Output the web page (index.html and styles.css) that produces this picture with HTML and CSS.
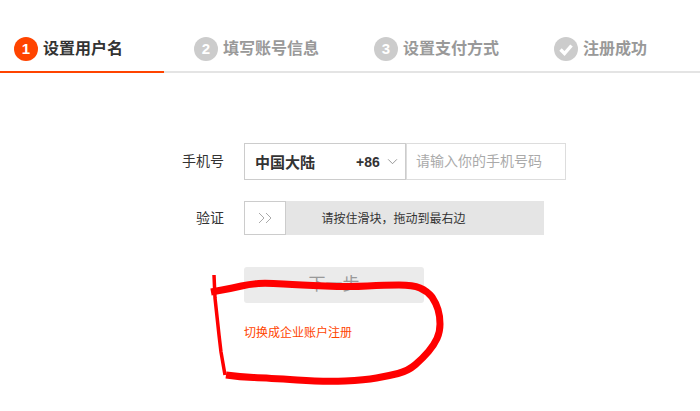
FILE: index.html
```html
<!DOCTYPE html>
<html lang="zh-CN">
<head>
  <meta charset="UTF-8">
  <title>注册</title>
  <link rel="stylesheet" href="styles.css">
</head>
<body>
  <div class="steps">
    <div class="step active"><span class="num">1</span>设置用户名</div>
    <div class="step"><span class="num">2</span>填写账号信息</div>
    <div class="step"><span class="num">3</span>设置支付方式</div>
    <div class="step">
      <span class="num"><svg viewBox="0 0 24 24"><path d="M6.5 12.5l4 4 7-8" /></svg></span>注册成功
    </div>
  </div>
  <form class="form">
    <div class="row">
      <label class="label label-phone">手机号</label>
      <div class="country">
        <span class="country-name">中国大陆</span>
        <span class="code">+86</span>
        <svg class="caret" viewBox="0 0 12 8"><path d="M1 1.5l5 5 5-5" /></svg>
      </div>
      <div class="phone">请输入你的手机号码</div>
    </div>
    <div class="row row-slide">
      <label class="label">验证</label>
      <div class="slider">
        <div class="handle"><svg viewBox="0 0 16 12"><path d="M2 1l5 5-5 5M9 1l5 5-5 5" /></svg></div>
        <div class="slider-text">请按住滑块，拖动到最右边</div>
      </div>
    </div>
    <div class="next">下一步</div>
    <a class="switch">切换成企业账户注册</a>
  </form>
  <svg class="scribble" viewBox="0 0 700 411">
    <path class="thin" d="M214 275L215 298L219 335L221 352L225 375" />
    <path class="thick" d="M211 292L222 290Q233 288 241.5 286Q250 284 258.5 283.5Q267 283 283.5 284Q300 285 325 286Q350 287 367.5 286Q385 285 399 285Q413 285 420 288Q427 291 432 297Q436 303 438 309.5Q440 316 440 324Q440 332 437 338.5Q434 345 428.5 351.5Q423 358 415.5 364.5Q408 371 398 373.5Q388 376 376.5 378Q365 380 345 381Q325 382 297 380Q267 378 253.5 377.5Q240 377 226 375" />
  </svg>
</body>
</html>
```
FILE: styles.css
```css
* { box-sizing: border-box; }
body {
  margin: 0;
  height: 411px;
  overflow: hidden;
  background: #fff;
  font-family: "Liberation Sans", "Noto Sans CJK SC", sans-serif;
  color: #333;
}
.steps {
  display: flex;
  height: 73px;
  padding-top: 37px;
  border-bottom: 2px solid #e4e4e4;
}
.step {
  flex: none;
  width: 180px;
  padding-left: 14px;
  margin-bottom: -2px;
  display: flex;
  align-items: flex-start;
  gap: 5px;
  font-size: 16px;
  line-height: 24px;
  font-weight: 700;
  color: #999;
}
.step:first-child { width: 164px; margin-right: 16px; }
.step.active {
  color: #333;
  border-bottom: 2px solid #ff4400;
}
.num {
  width: 24px;
  height: 24px;
  border-radius: 50%;
  background: #ccc;
  color: #fff;
  font-size: 15px;
  text-align: center;
  flex: none;
}
.active .num { background: #ff4400; }
.num svg {
  display: block;
  width: 24px;
  height: 24px;
  fill: none;
  stroke: #fff;
  stroke-width: 3.4;
}
.form {
  padding: 70px 0 0 0;
  font-size: 14px;
}
.row {
  display: flex;
  height: 37px;
  align-items: stretch;
}
.row-slide { height: 34px; margin-top: 21px; }
.label {
  width: 224px;
  text-align: right;
  margin-right: 20px;
  line-height: 34px;
  color: #333;
}
.label-phone { line-height: 36px; }
.country {
  width: 162px;
  border: 1px solid #ccc;
  display: flex;
  align-items: center;
  padding: 0 6px 0 10px;
}
.country-name { font-weight: 700; font-size: 15px; width: 101px; }
.code { font-weight: 700; font-size: 14px; color: #333; }
.caret {
  width: 11px;
  height: 7px;
  margin-left: 7px;
  fill: none;
  stroke: #888;
}
.phone {
  width: 160px;
  border: 1px solid #ddd;
  padding-left: 9px;
  line-height: 35px;
  color: #aaa;
}
.slider {
  width: 300px;
  background: #e5e5e5;
  display: flex;
}
.handle {
  width: 42px;
  background: #fff;
  border: 1px solid #ccc;
  display: flex;
  align-items: center;
  justify-content: center;
}
.handle svg {
  width: 16px;
  height: 12px;
  fill: none;
  stroke: #aaa;
}
.slider-text {
  flex: 1;
  font-size: 12px;
  line-height: 36px;
  text-align: center;
  padding-right: 43px;
  color: #333;
}
.next {
  width: 180px;
  height: 36px;
  margin: 32px 0 0 244px;
  background: #ebebeb;
  border-radius: 3px;
  color: #999;
  font-size: 17px;
  line-height: 36px;
  text-align: center;
}
.switch {
  display: block;
  margin: 21px 0 0 244px;
  font-size: 12px;
  line-height: 18px;
  color: #ff4400;
}
.scribble {
  position: absolute;
  left: 0;
  top: 0;
  width: 700px;
  height: 411px;
  fill: none;
  stroke: #ff0000;
  stroke-linejoin: round;
}
.thin { stroke-width: 3.5; }
.thick { stroke-width: 7; }
```
